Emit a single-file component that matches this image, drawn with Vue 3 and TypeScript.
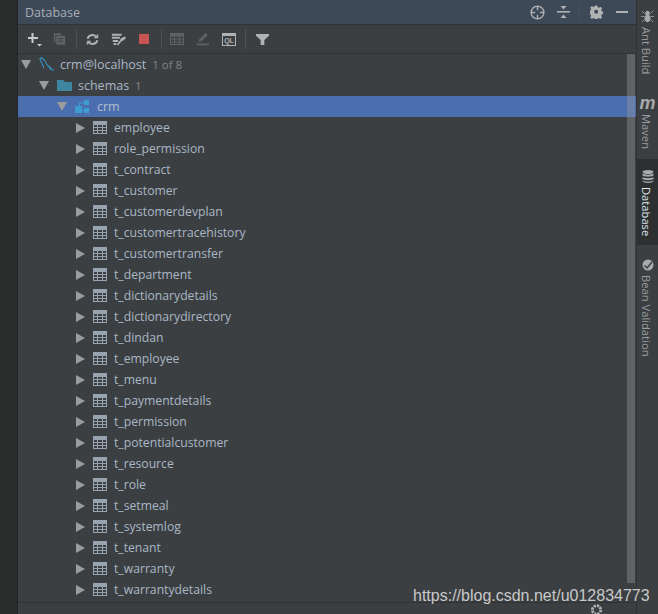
<template>
  <div class="ide">
    <div class="left-stripe"></div>
    <div class="panel">
      <div class="header">
        <span class="title">Database</span>
        <div class="header-icons">
          <svg width="15" height="15" viewBox="0 0 16 16" fill="none" stroke="#afb1b3" stroke-width="1.500">
            <circle cx="8" cy="8" r="6.800" />
            <path d="M8 1v4.500M8 10.500V15M1 8h4.500M10.500 8H15" />
          </svg>
          <svg class="collapse" width="13" height="14" viewBox="0 0 13 14" fill="#afb1b3">
            <rect x="0" y="6" width="13" height="1.600" />
            <path d="M3.500 1h6L6.500 4.500zM3.500 13h6L6.500 9.500z" />
          </svg>
          <span class="sep head-sep"></span>
          <svg class="gear" width="13" height="14" viewBox="0 0 14 14">
            <path fill="#afb1b3" fill-rule="evenodd" d="M5.600 0h2.800l.4 2 1.300.6 1.800-1.100 1.900 2-1.100 1.700.5 1.300 2 .5v2.800l-2 .4-.5 1.300 1.100 1.800-2 1.900-1.700-1.100-1.300.5-.4 2H5.600l-.4-2-1.300-.5-1.800 1.100-1.900-2 1.100-1.700-.5-1.300-2-.5V6l2-.4.500-1.300L.2 2.500 2.200.6l1.700 1.100 1.300-.6zM7 4.700a2.300 2.300 0 1 0 0 4.600 2.300 2.300 0 0 0 0-4.600z" transform="scale(.95)" />
          </svg>
          <span class="dash"></span>
        </div>
      </div>

      <div class="toolbar">
        <svg width="18" height="20" viewBox="0 0 18 20" fill="#c9cbcd">
          <path d="M4.500 4h2v4h4.500v2H6.500v4h-2v-4H1V8h3.500z" />
          <path d="M10 15h5l-2.500 2.500z" />
        </svg>
        <svg width="13" height="14" viewBox="0 0 16 16" fill="#5f6264">
          <path d="M1 1h9v2H3v9H1z" />
          <path fill-rule="evenodd" d="M4 4h11v11H4zM6.500 7v1.300h6V7zM6.500 10v1.300h6V10z" />
        </svg>
        <span class="sep"></span>
        <svg width="13" height="13" viewBox="0 0 16 16" fill="none" stroke="#afb1b3" stroke-width="2.400">
          <path d="M2 7a6 5.500 0 0 1 10.500-2.500" />
          <path d="M14 9a6 5.500 0 0 1-10.500 2.500" />
          <path d="M14.500 1.500v4.500H10" fill="#afb1b3" stroke-width="1" />
          <path d="M1.500 14.500V10H6" fill="#afb1b3" stroke-width="1" />
        </svg>
        <svg width="16" height="15" viewBox="0 0 18 16" fill="#afb1b3">
          <path d="M1 1.500h11v2.200H1zM1 5h9v2.200H1zM2 8.500h6v2.200H2zM3 12h3v2.200H3z" />
          <path d="M15.500 4.500l1.500 1.500-3.500 3.500-1.500.3-4 5-1.500-1.300 4-5 .3-1.500z" />
        </svg>
        <span class="stop"></span>
        <span class="sep"></span>
        <svg width="14" height="12" viewBox="0 0 14 12" fill="#5f6264">
          <path fill-rule="evenodd" d="M0 0h14v12H0zM1 3.500v2h3v-2zm4 0v2h4v-2zm5 0v2h3v-2zM1 6.500v2h3v-2zm4 0v2h4v-2zm5 0v2h3v-2zM1 9.500V11h3V9.500zm4 0V11h4V9.500zm5 0V11h3V9.500z" />
        </svg>
        <svg width="14" height="14" viewBox="0 0 16 16" fill="#5f6264">
          <path d="M1 13h14v2H1zM11 1l2.500 2.500L6 10.500l-3 .8.700-3z" />
        </svg>
        <span class="ql">QL</span>
        <span class="sep"></span>
        <svg width="13" height="13" viewBox="0 0 14 14" fill="#afb1b3">
          <path d="M0 1h14v2L9 7.500V13H5V7.500L0 3z" />
        </svg>
      </div>

      <div class="tree">
        <div class="row" style="padding-left: 3px">
          <span class="arrow down"></span>
          <svg class="db-icon" width="16" height="15" viewBox="0 0 16 15" fill="none" stroke="#3592c4" stroke-width="1.100">
            <path d="M1 1c2.500-.500 4 1 5.500 4 1 2 2.500 4.500 4.500 6l4 2.500" />
            <path d="M1 1c-.2 2 .8 3 1.800 5 .8 1.500 1.200 3 2 5" />
            <path d="M10.500 9l1.500 4" />
          </svg>
          <span class="name">crm@localhost</span>
          <span class="count">1 of 8</span>
        </div>
        <div class="row" style="padding-left: 21px">
          <span class="arrow down"></span>
          <svg class="folder-icon" width="15" height="13" viewBox="0 0 15 13" fill="#3e86a0">
            <path d="M0 1h6l2 2h7v9H0z" />
          </svg>
          <span class="name">schemas</span>
          <span class="count">1</span>
        </div>
        <div class="row selected" style="padding-left: 39px">
          <span class="arrow down"></span>
          <svg class="schema-icon" width="15" height="15" viewBox="0 0 15 15" fill="#3d9dd0">
            <rect x="0" y="7" width="7" height="7" />
            <rect x="9" y="1" width="5" height="5" />
            <rect x="9" y="9" width="5" height="5" />
            <path d="M4 7V3.500h5v1H5V7zM7 11h2v1H7z" />
          </svg>
          <span class="name">crm</span>
        </div>
        <div v-for="table in tables" :key="table" class="row table-row" style="padding-left: 58px">
          <span class="arrow right"></span>
          <svg class="table-icon" width="14" height="13" viewBox="0 0 14 13" fill="#97a4b0">
            <path fill-rule="evenodd" d="M0 0h14v13H0zM1 4v2h3V4zm4 0v2h4V4zm5 0v2h3V4zM1 7v2h3V7zm4 0v2h4V7zm5 0v2h3V7zM1 10v2h3v-2zm4 0v2h4v-2zm5 0v2h3v-2z" />
          </svg>
          <span class="name">{{ table }}</span>
        </div>
        <div class="scrollbar"></div>
      </div>
      <div class="status">
        <svg class="status-gear" width="13" height="11" viewBox="0 0 14 11">
          <circle cx="7" cy="7" r="4.500" fill="none" stroke="#afb1b3" stroke-width="3" stroke-dasharray="2.500 1" />
        </svg>
      </div>
    </div>

    <div class="right-stripe">
      <div class="tab ant">
        <svg width="13" height="13" viewBox="0 0 14 14" fill="#a8aaac" stroke="#a8aaac" stroke-width=".8">
          <ellipse cx="7" cy="3.500" rx="2" ry="2.300" />
          <ellipse cx="7" cy="9" rx="2.800" ry="3.800" />
          <path d="M1 1l3 3M13 1l-3 3M0 7h4M14 7h-4M1 13l3-3M13 13l-3-3" fill="none" />
        </svg>
        <span class="tab-label">Ant Build</span>
      </div>
      <div class="tab maven">
        <span class="maven-m">m</span>
        <span class="tab-label">Maven</span>
      </div>
      <div class="tab active">
        <svg width="12" height="13" viewBox="0 0 12 13" fill="#a8aaac">
          <ellipse cx="6" cy="2" rx="5.500" ry="2" />
          <path d="M.5 3.500C2 5 10 5 11.500 3.500v2C10 7 2 7 .5 5.500zM.5 7C2 8.500 10 8.500 11.500 7v2C10 10.500 2 10.500 .5 9zM.5 10.500C2 12 10 12 11.500 10.500V11c-1 2.500-10 2.500-11 0z" />
        </svg>
        <span class="tab-label">Database</span>
      </div>
      <div class="tab bean">
        <svg width="12" height="12" viewBox="0 0 12 12">
          <circle cx="6" cy="6" r="5.500" fill="#a8aaac" />
          <path d="M2.500 6.500l2.500 2.500 5-6" fill="none" stroke="#3c3f41" stroke-width="1.500" />
        </svg>
        <span class="tab-label">Bean Validation</span>
      </div>
    </div>

    <div class="watermark">https://blog.csdn.net/u012834773</div>
  </div>
</template>

<script setup lang="ts">
const tables: string[] = [
  'employee',
  'role_permission',
  't_contract',
  't_customer',
  't_customerdevplan',
  't_customertracehistory',
  't_customertransfer',
  't_department',
  't_dictionarydetails',
  't_dictionarydirectory',
  't_dindan',
  't_employee',
  't_menu',
  't_paymentdetails',
  't_permission',
  't_potentialcustomer',
  't_resource',
  't_role',
  't_setmeal',
  't_systemlog',
  't_tenant',
  't_warranty',
  't_warrantydetails',
]
</script>

<style>
html,
body {
  margin: 0;
  background: #3c3f41;
}
</style>

<style scoped>
.ide {
  position: relative;
  display: flex;
  width: 658px;
  height: 614px;
  overflow: hidden;
  font-family: 'Open Sans', 'Noto Sans', sans-serif;
  font-size: 12.5px;
  color: #a9b7c6;
  background: #3c3f41;
}

.left-stripe {
  width: 17px;
  flex: none;
  background: #2a2b2b;
  border-right: 1px solid #232425;
}

.panel {
  flex: 1;
  display: flex;
  flex-direction: column;
  min-width: 0;
}

.header {
  height: 24px;
  flex: none;
  display: flex;
  align-items: center;
  justify-content: space-between;
  padding-left: 7px;
  background: #3d4956;
  border-bottom: 1px solid #323232;
}

.title {
  color: #a7aeb6;
}

.header-icons {
  display: flex;
  align-items: center;
  padding-right: 8px;
}

.collapse {
  margin-left: 12px;
}

.head-sep {
  height: 20px;
  margin-left: 9px;
  background: #4b5663;
}

.gear {
  margin-left: 10px;
}

.dash {
  width: 12px;
  height: 2px;
  margin-left: 13px;
  background: #afb1b3;
}

.toolbar {
  height: 28px;
  flex: none;
  display: grid;
  grid-template-columns: 26px 23px 10px 25px 28px 22px 9px 26px 26px 23px 11px auto;
  align-items: center;
  padding-left: 9px;
  border-bottom: 1px solid #323232;
}

.sep {
  display: block;
  width: 1px;
  height: 20px;
  flex: none;
  background: #4e5153;
}

.stop {
  width: 10px;
  height: 10px;
  background: #c75450;
}

.ql {
  width: 14px;
  height: 13px;
  box-sizing: border-box;
  border: 1px solid #afb1b3;
  border-top-width: 3px;
  font-size: 7px;
  font-weight: 700;
  line-height: 9px;
  text-align: center;
  color: #afb1b3;
  font-family: 'Liberation Sans', sans-serif;
}

.tree {
  position: relative;
  flex: 1;
  min-height: 0;
}

.row {
  display: flex;
  align-items: center;
  height: 21px;
  box-sizing: border-box;
  white-space: nowrap;
}

.table-row {
  font-size: 12.2px;
}

.row.selected {
  background: #4b6eaf;
  color: #b5bfcc;
}

.arrow {
  display: block;
  flex: none;
  width: 0;
  height: 0;
}

.arrow.down {
  margin-right: 8px;
  border-left: 5px solid transparent;
  border-right: 5px solid transparent;
  border-top: 9px solid #9a9c9e;
}

.arrow.right {
  margin-right: 8px;
  border-top: 5px solid transparent;
  border-bottom: 5px solid transparent;
  border-left: 9px solid #9a9c9e;
}

.db-icon {
  flex: none;
  margin-right: 5px;
}

.folder-icon {
  flex: none;
  margin-right: 6px;
}

.schema-icon {
  flex: none;
  margin-right: 7px;
}

.table-icon {
  flex: none;
  margin-right: 7px;
}

.count {
  margin-left: 6px;
  color: #808385;
  font-size: 11.5px;
}

.scrollbar {
  position: absolute;
  top: 0;
  right: 1px;
  width: 8px;
  height: 529px;
  background: rgba(150, 152, 154, 0.4);
}

.status {
  height: 11px;
  flex: none;
  display: flex;
  justify-content: flex-end;
  padding-right: 33px;
  border-top: 1px solid #323232;
  overflow: hidden;
}

.right-stripe {
  width: 21px;
  flex: none;
  display: flex;
  flex-direction: column;
  border-left: 1px solid #323232;
}

.tab {
  display: flex;
  flex-direction: column;
  align-items: center;
  box-sizing: border-box;
}

.tab-label {
  writing-mode: vertical-rl;
  font-size: 11.2px;
  color: #9a9da0;
  line-height: 20px;
  margin-right: 3px;
}

.ant {
  height: 90px;
  padding-top: 10px;
  gap: 4px;
}

.maven {
  height: 69px;
  padding-top: 6px;
  gap: 4px;
}

.maven-m {
  font-family: 'Liberation Sans', sans-serif;
  font-size: 18px;
  font-weight: 700;
  font-style: italic;
  line-height: 14px;
  color: #a8aaac;
}

.active {
  height: 86px;
  padding-top: 11px;
  gap: 4px;
  background: #2d2f30;
}

.active .tab-label {
  color: #dfe6ee;
}

.bean {
  padding-top: 14px;
  gap: 4px;
}

.watermark {
  position: absolute;
  left: 413px;
  top: 586px;
  font-family: 'Liberation Sans', sans-serif;
  font-size: 16px;
  line-height: 19px;
  color: #c8c9ca;
  white-space: nowrap;
}
</style>
